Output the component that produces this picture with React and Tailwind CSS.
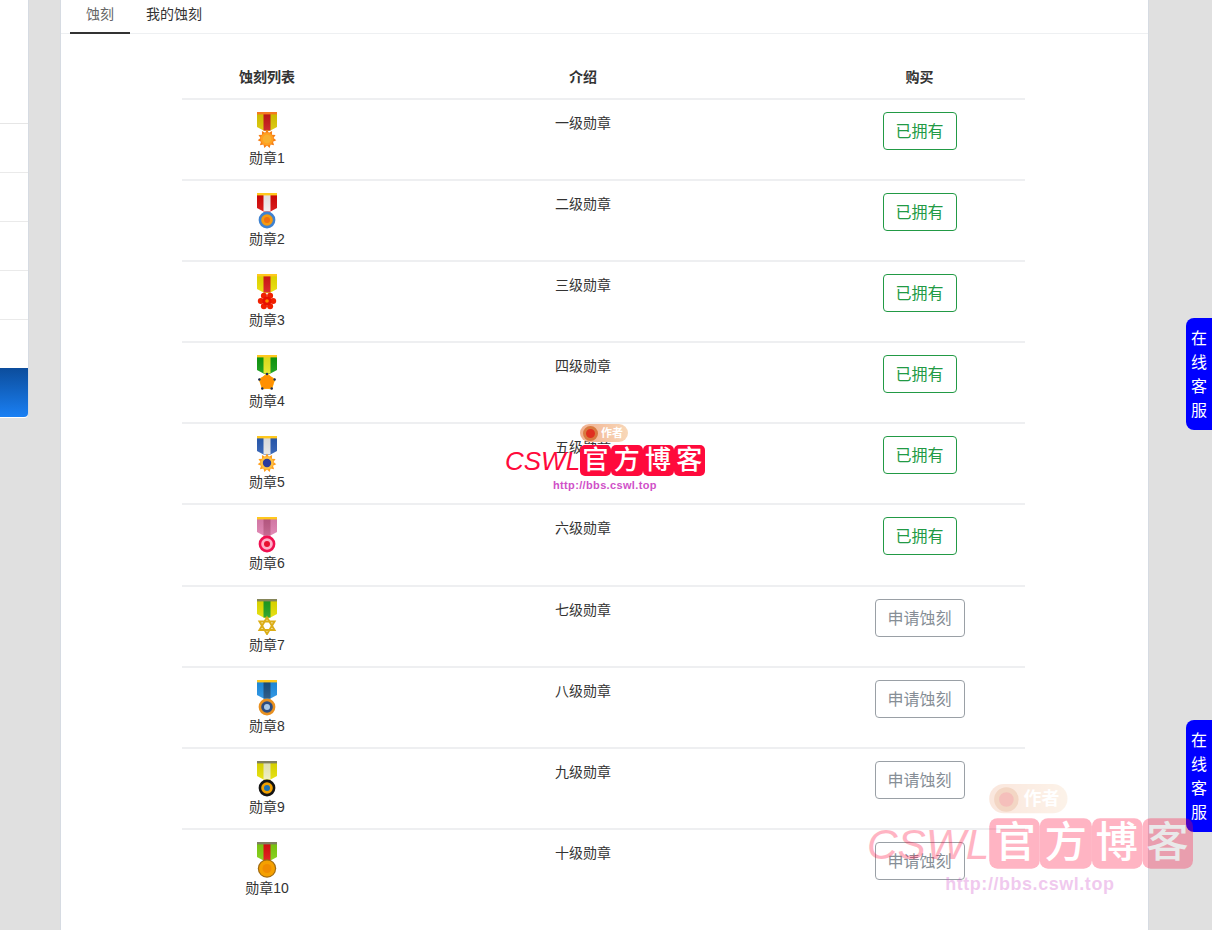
const medals = [
  { id: 1, top: '#f47a20', side: '#dcc800', mid: '#c81818', shape: 'sun', ray: '#f57f17', core: '#ffa020', dot: '#f8b030' },
  { id: 2, top: '#ffc81e', side: '#d80808', mid: '#f4f0f0', shape: 'ring', ray: '#3f82d0', core: '#f59a10', dot: '#f07010' },
  { id: 3, top: '#ffc81e', side: '#ece000', mid: '#d81818', shape: 'flower', ray: '#f02000', core: '#e81000', dot: '#ff9000' },
  { id: 4, top: '#ffc81e', side: '#109c10', mid: '#e8e820', shape: 'studs', ray: '#ffb010', core: '#ff9000', dot: '#1a2a5a' },
  { id: 5, top: '#ffc81e', side: '#2a5cb4', mid: '#e8e8e8', shape: 'sun', ray: '#ffa020', core: '#ffc040', dot: '#2c3a9c' },
  { id: 6, top: '#ffc81e', side: '#e080b0', mid: '#c05c88', shape: 'ring', ray: '#f01050', core: '#ffb0c8', dot: '#e81030' },
  { id: 7, top: '#86865a', side: '#e6e000', mid: '#20a020', shape: 'star', ray: '#dcae18', core: '#ffffff', dot: '#ffffff' },
  { id: 8, top: '#ffc81e', side: '#2090e4', mid: '#1c5080', shape: 'ring', ray: '#e89020', core: '#2c4c80', dot: '#a8c8e8' },
  { id: 9, top: '#808060', side: '#e6e000', mid: '#f0f0c0', shape: 'ring', ray: '#141414', core: '#f0a000', dot: '#1c70b0' },
  { id: 10, top: '#808060', side: '#80d010', mid: '#e01010', shape: 'coin', ray: '#a06a10', core: '#f5a000', dot: '#f08c00' },
]

const rankNames = ['一', '二', '三', '四', '五', '六', '七', '八', '九', '十']

function spikes(cx, cy, outer, inner, count) {
  const pts = []
  for (let i = 0; i < count * 2; i++) {
    const r = i % 2 === 0 ? outer : inner
    const a = (Math.PI * i) / count - Math.PI / 2
    pts.push(`${(cx + r * Math.cos(a)).toFixed(2)},${(cy + r * Math.sin(a)).toFixed(2)}`)
  }
  return pts.join(' ')
}

function MedalBody({ m }) {
  if (m.shape === 'sun') {
    return (
      <>
        <polygon points={spikes(10, 27, 9.4, 6.6, 11)} fill={m.ray} />
        <circle cx="10" cy="27" r="6.4" fill={m.core} />
        <circle cx="10" cy="27" r="4.2" fill={m.dot} />
      </>
    )
  }
  if (m.shape === 'flower') {
    return (
      <>
        {[0, 60, 120, 180, 240, 300].map((deg) => (
          <circle
            key={deg}
            cx={10 + 6.2 * Math.cos((deg * Math.PI) / 180)}
            cy={27 + 6.2 * Math.sin((deg * Math.PI) / 180)}
            r="3"
            fill={m.ray}
          />
        ))}
        <circle cx="10" cy="27" r="4.6" fill={m.core} />
        <circle cx="10" cy="27" r="1.8" fill={m.dot} />
      </>
    )
  }
  if (m.shape === 'studs') {
    return (
      <>
        <polygon points={spikes(10, 27, 9.2, 6.8, 5)} fill={m.ray} />
        <circle cx="10" cy="27" r="6.8" fill={m.core} />
        {[-90, -18, 54, 126, 198].map((deg) => (
          <circle
            key={deg}
            cx={10 + 8 * Math.cos((deg * Math.PI) / 180)}
            cy={27 + 8 * Math.sin((deg * Math.PI) / 180)}
            r="1.2"
            fill={m.dot}
          />
        ))}
      </>
    )
  }
  if (m.shape === 'star') {
    return (
      <g fill="none" stroke={m.ray} strokeWidth="2">
        <polygon points="10,18.5 17.5,31 2.5,31" />
        <polygon points="10,35 17.5,22.5 2.5,22.5" />
      </g>
    )
  }
  if (m.shape === 'coin') {
    return (
      <>
        <circle cx="10" cy="26.5" r="9.2" fill={m.ray} />
        <circle cx="10" cy="26.5" r="8" fill={m.core} />
        <circle cx="10" cy="26.5" r="4.5" fill={m.dot} />
      </>
    )
  }
  return (
    <>
      <circle cx="10" cy="27" r="8.4" fill={m.ray} />
      <circle cx="10" cy="27" r="5.8" fill={m.core} />
      <circle cx="10" cy="27" r="3" fill={m.dot} />
    </>
  )
}

function Medal({ m }) {
  return (
    <svg width="20" height="36" viewBox="0 0 20 36" className="block mx-auto">
      <defs>
        <linearGradient id={`shade${m.id}`} x1="0" y1="0" x2="0" y2="1">
          <stop offset="0" stopColor="#000" stopOpacity="0.07" />
          <stop offset="1" stopColor="#fff" stopOpacity="0.1" />
        </linearGradient>
      </defs>
      <polygon points="0,2 20,2 20,15 12.5,19 7.5,19 0,15" fill={m.side} />
      <polygon points="6.5,2 13.5,2 13.5,18.5 6.5,18.5" fill={m.mid} />
      <polygon points="0,2 20,2 20,15 12.5,19 7.5,19 0,15" fill={`url(#shade${m.id})`} />
      <rect x="0" y="0" width="20" height="2.4" fill={m.top} />
      <MedalBody m={m} />
    </svg>
  )
}

function Watermark({ className }) {
  return (
    <div className={`absolute w-[200px] h-[68px] pointer-events-none ${className}`}>
      <div className="absolute left-[75px] top-0 w-[48px] h-[18px] rounded-full bg-gradient-to-r from-[#f0b090] to-[#f8d8b8] flex items-center pl-[3px]">
        <span className="w-[15px] h-[15px] rounded-full border-[3px] border-[#d87a40] bg-[#e03020]"></span>
        <span className="ml-[3px] text-[11px] leading-none font-bold text-white">作者</span>
      </div>
      <div className="absolute left-0 top-[21px] flex items-center h-[31px]">
        <span className="w-[75px] text-[26px] leading-none italic text-[#ff0a3c] font-['Liberation_Sans',sans-serif] whitespace-nowrap">CSWL</span>
        <div className="flex w-[125px]">
          {['官', '方', '博', '客'].map((c) => (
            <span key={c} className="w-[31.25px] h-[31px] rounded-[5px] bg-[#ff0a3c] text-white text-[26px] leading-[30px] text-center font-medium">
              {c}
            </span>
          ))}
        </div>
      </div>
      <div className="absolute left-[48px] top-[54px] text-[11px] leading-[14px] font-bold text-[#d050c8] whitespace-nowrap font-['Liberation_Sans',sans-serif] tracking-[0.35px]">
        http://bbs.cswl.top
      </div>
    </div>
  )
}

function ChatTab({ className }) {
  return (
    <div className={`absolute right-0 w-[26px] pt-[9px] pb-[7px] pl-[5px] bg-[#0000ff] rounded-l-lg text-white text-base leading-6 ${className}`}>
      {['在', '线', '客', '服'].map((c) => (
        <div key={c}>{c}</div>
      ))}
    </div>
  )
}

export default function App() {
  return (
    <div className="relative flex h-[930px] w-[1212px] overflow-hidden bg-[#e0e0e0] text-sm text-[#333] font-['Liberation_Sans','Noto_Sans_CJK_SC',sans-serif]">
      <aside className="w-[29px] h-[418px] shrink-0 border-r border-[#d6dbe2] bg-white rounded-br flex flex-col">
        <div className="h-[124px] border-b border-[#e6e6e6]"></div>
        <div className="h-[49px] border-b border-[#eaeaea]"></div>
        <div className="h-[49px] border-b border-[#eaeaea]"></div>
        <div className="h-[49px] border-b border-[#eaeaea]"></div>
        <div className="h-[49px] border-b border-[#eaeaea]"></div>
        <div className="h-[48px]"></div>
        <div className="h-[49px] rounded-br bg-gradient-to-b from-[#0c4d9c] to-[#1a80f4]"></div>
      </aside>

      <main className="ml-[31px] w-[1089px] h-full bg-white border-x border-[#d6dbe2]">
        <div className="flex h-[34px] px-[9px] border-b border-[#eef0f2]">
          <div className="w-[60px] h-[34px] border-b-2 border-[#333] text-center text-[#666] leading-[28px]">蚀刻</div>
          <div className="px-4 leading-[28px]">我的蚀刻</div>
        </div>

        <div className="mt-[19px] ml-[121px] w-[843px]">
          <div className="grid grid-cols-[170px_462px_211px] h-[45px] font-bold text-center items-center pt-[3px]">
            <div>蚀刻列表</div>
            <div>介绍</div>
            <div>购买</div>
          </div>
          {medals.map((m, i) => (
            <div key={m.id} className="grid grid-cols-[170px_462px_211px] h-[81.1px] border-t-2 border-[#eeeff1] text-center">
              <div className="pt-3 leading-[21px]">
                <Medal m={m} />
                <div>勋章{m.id}</div>
              </div>
              <div className="pt-[13px] leading-[21px]">{rankNames[i]}级勋章</div>
              <div className="pt-3">
                {i < 6 ? (
                  <button className="h-[38px] w-[74px] pt-[2px] rounded border border-[#229a45] text-base text-[#229a45]">已拥有</button>
                ) : (
                  <button className="h-[38px] w-[90px] pt-[2px] rounded border border-[#9aa0a6] text-base text-[#868e96]">申请蚀刻</button>
                )}
              </div>
            </div>
          ))}
        </div>
      </main>

      <ChatTab className="top-[318px]" />
      <ChatTab className="top-[720px]" />
      <Watermark className="left-[505px] top-[424px]" />
      <Watermark className="left-[867px] top-[784px] origin-top-left scale-[1.63] opacity-30" />
    </div>
  )
}
